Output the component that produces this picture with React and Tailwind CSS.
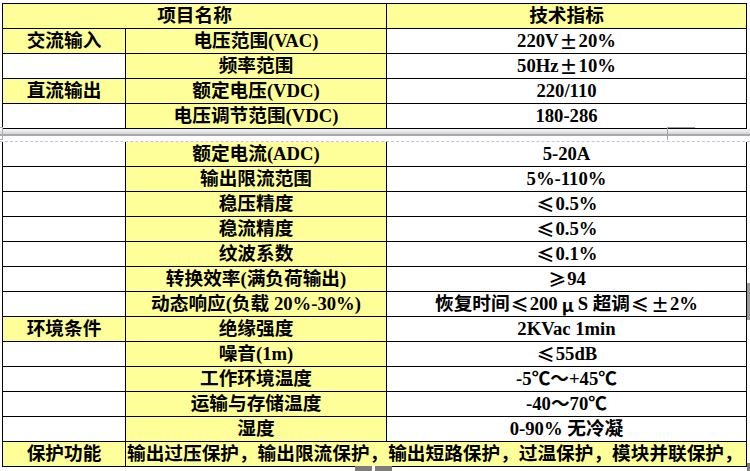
const font = "font-['Liberation_Serif','Noto_Sans_CJK_SC',serif]";

const top = [
  ["交流输入", true, "电压范围(VAC)", "220V±20%"],
  ["", false, "频率范围", "50Hz±10%"],
  ["直流输出", true, "额定电压(VDC)", "220/110"],
  ["", false, "电压调节范围(VDC)", "180-286"],
];

const bottom = [
  ["", false, "额定电流(ADC)", "5-20A"],
  ["", false, "输出限流范围", "5%-110%"],
  ["", false, "稳压精度", "≤0.5%"],
  ["", false, "稳流精度", "≤0.5%"],
  ["", false, "纹波系数", "≤0.1%"],
  ["", false, "转换效率(满负荷输出)", "≥94"],
  ["", false, "动态响应(负载 20%-30%)", "恢复时间≤200μS 超调≤±2%"],
  ["环境条件", true, "绝缘强度", "2KVac 1min"],
  ["", false, "噪音(1m)", "≤55dB"],
  ["", false, "工作环境温度", "-5℃～+45℃"],
  ["", false, "运输与存储温度", "-40～70℃"],
  ["", false, "湿度", "0-90% 无冷凝"],
];

// symbols are full width in the original font
const Wide = ({ text }) =>
  text.split(/([≤≥±μ])/).map((s, i) =>
    /^[≤≥±μ]$/.test(s) ? (
      <span
        key={i}
        className="inline-block w-[20px] text-center text-[18px] font-['Noto_Sans_CJK_SC',sans-serif]"
      >
        {s}
      </span>
    ) : (
      s
    )
  );

const Cell = ({ w, yellow, children }) => (
  <div
    className={`${w} h-[25px] shrink-0 flex items-center justify-center whitespace-nowrap border-r border-b border-black ${
      yellow ? "bg-[#ffff99]" : "bg-white"
    }`}
  >
    {children}
  </div>
);

const Row = ({ r }) => (
  <div className="flex">
    <Cell w="w-[123px]" yellow={r[1]}>
      {r[0]}
    </Cell>
    <Cell w="w-[261px]" yellow>
      {r[2]}
    </Cell>
    <Cell w="w-[360px]">
      <Wide text={r[3]} />
    </Cell>
  </div>
);

export default function App() {
  return (
    <div
      className={`relative w-[750px] h-[471px] bg-white overflow-hidden text-black font-bold text-[18.67px] leading-none ${font}`}
    >
      {/* first page */}
      <div className="pt-[3px] pl-[2px]">
        <div className="w-[745px] border-t border-l border-black">
          <div className="flex">
            <Cell w="w-[384px]" yellow>
              项目名称
            </Cell>
            <Cell w="w-[360px]" yellow>
              技术指标
            </Cell>
          </div>
          {top.map((r, i) => (
            <Row key={i} r={r} />
          ))}
        </div>
      </div>

      {/* page break */}
      <div className="h-[12px] flex flex-col">
        <div className="h-[5px] bg-gradient-to-b from-[#f7f7f7] to-[#d4d5d8]"></div>
        <div className="h-[2px] bg-[#a8a9ae]"></div>
        <div className="h-[5px] bg-white"></div>
      </div>
      <div className="border-t border-dashed border-[#c4c4c4]"></div>

      {/* second page */}
      <div className="pl-[2px]">
        <div className="w-[745px] border-l border-black">
          {bottom.map((r, i) => (
            <Row key={i} r={r} />
          ))}
          <div className="flex">
            <Cell w="w-[123px]" yellow>
              保护功能
            </Cell>
            <div className="w-[621px] h-[25px] flex items-center pl-px whitespace-nowrap overflow-hidden border-r border-b border-black bg-[#ffff99]">
              输出过压保护，输出限流保护，输出短路保护，过温保护，模块并联保护，
            </div>
          </div>
        </div>
      </div>

      {/* editor marks */}
      <div className="absolute left-0 top-[127px] w-[3px] h-[13px] border-y border-r border-[#b0b0b0]"></div>
      <div className="absolute left-[667px] top-[127px] w-[28px] h-[13px] border-l border-t border-[#a0a0a0]"></div>
      <div className="absolute left-[747px] top-[283px] w-[3px] h-[37px] bg-[#9a9a9a]"></div>
      <div className="absolute left-[355px] top-[466px] w-[37px] h-[5px] bg-[#7d7d7d] flex justify-center">
        <div className="w-[3px] h-[5px] bg-white"></div>
      </div>
      <div className="absolute left-[747px] top-[463px] w-[3px] h-[8px] bg-[#7d7d7d]"></div>
    </div>
  );
}
